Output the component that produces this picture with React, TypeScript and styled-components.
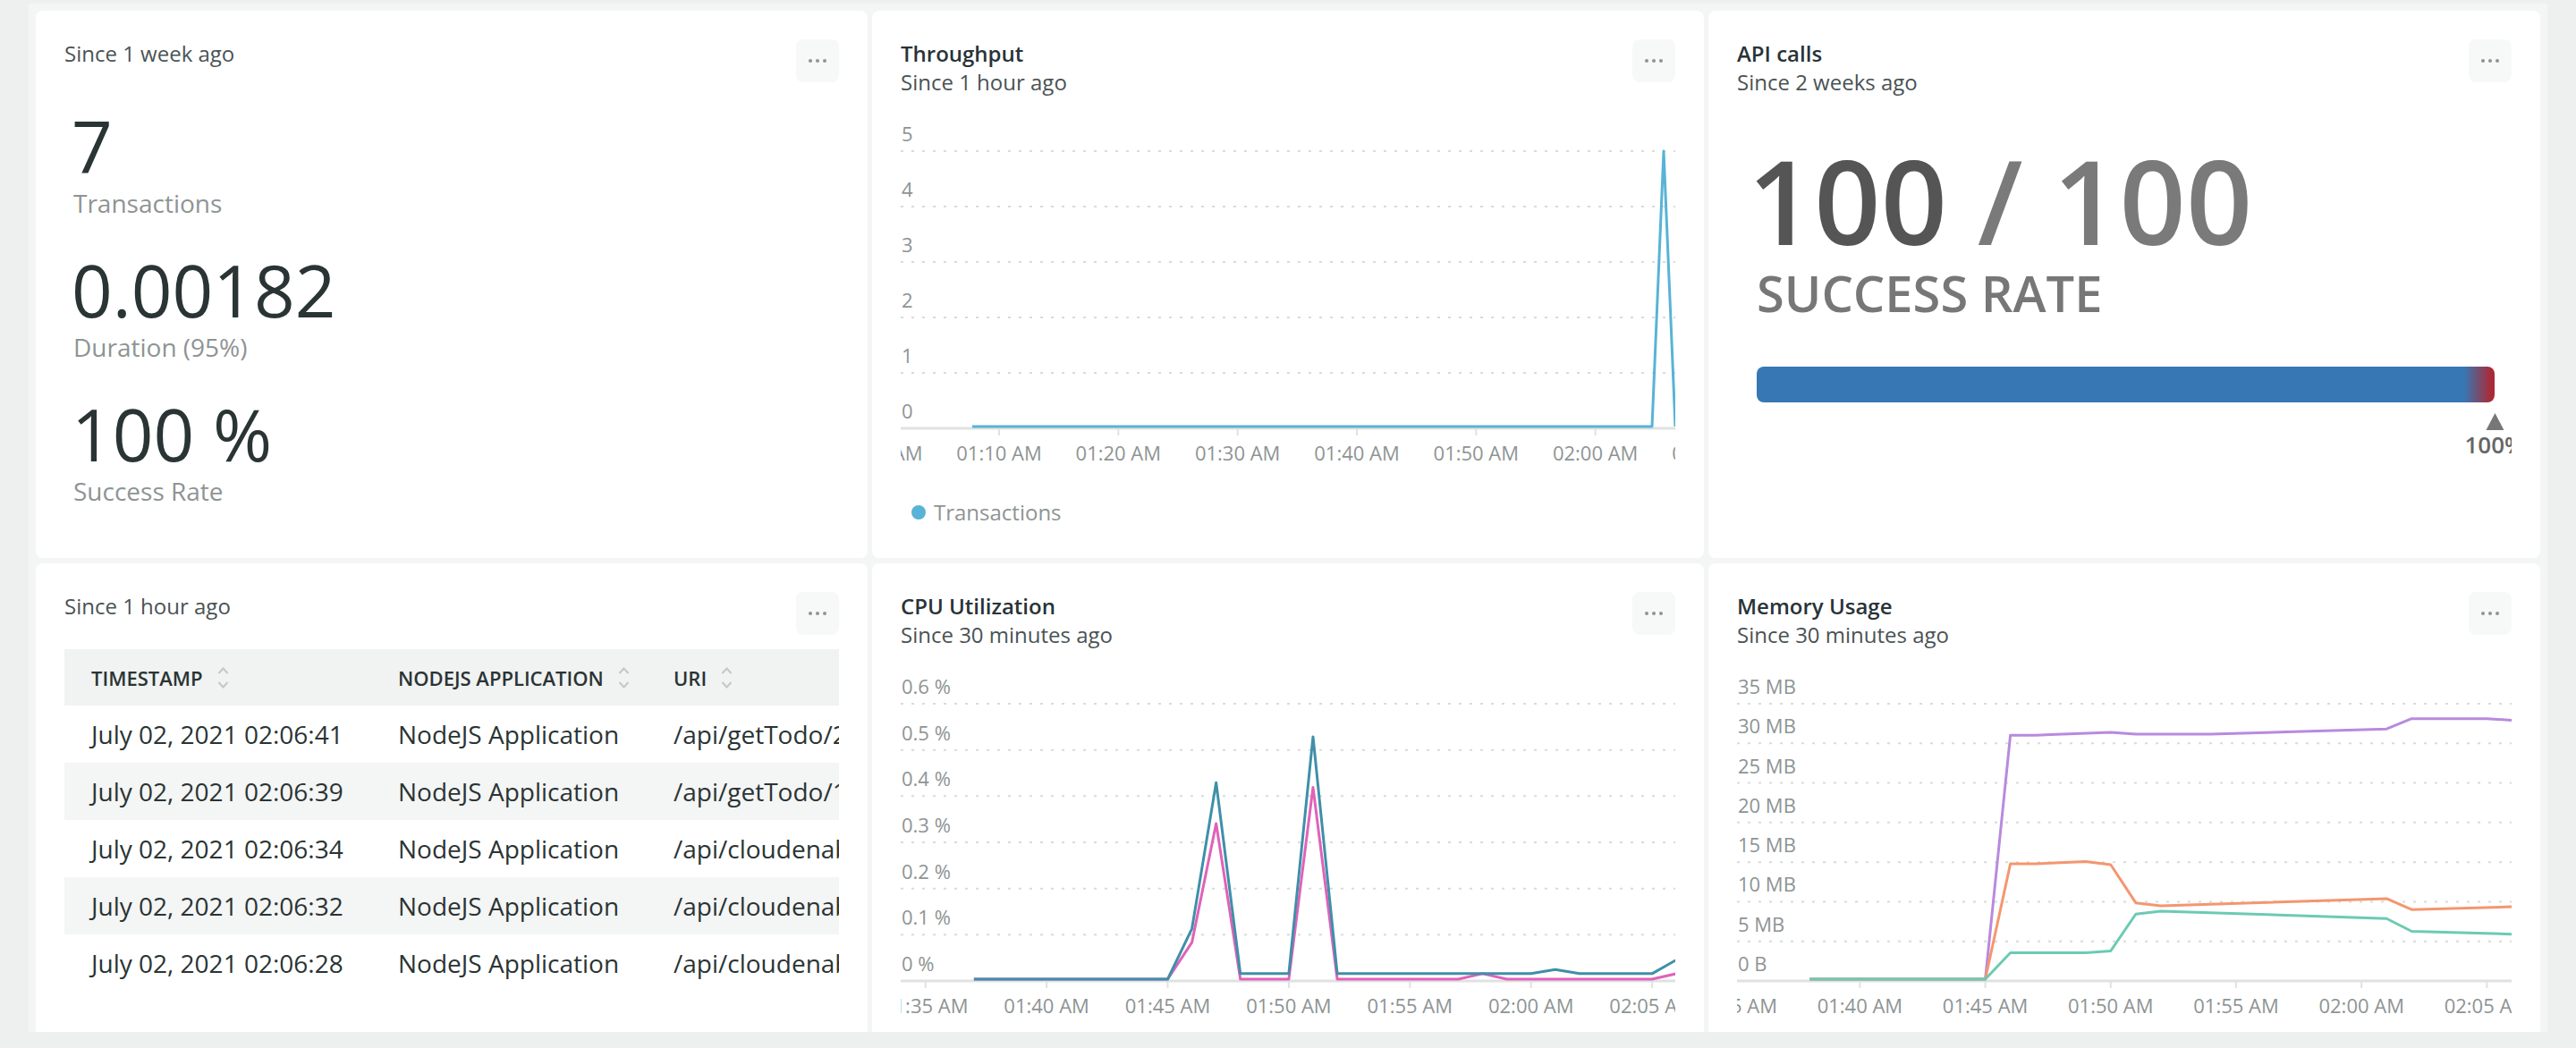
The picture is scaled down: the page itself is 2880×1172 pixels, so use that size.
import React from "react";
import styled, { createGlobalStyle } from "styled-components";

const GlobalStyle = createGlobalStyle`
  *, *::before, *::after { box-sizing: border-box; }
  html, body { margin: 0; padding: 0; background: #eef0f0; }
  body {
    font-family: "Open Sans", "Noto Sans", sans-serif;
    width: 2880px;
    height: 1172px;
    overflow: hidden;
  }
`;

const Page = styled.div`
  width: 2880px;
  height: 1172px;
  padding: 4px 32px 18px 32px;
  background: #eef0f0;
`;

const Dashboard = styled.main`
  height: 1150px;
  background: #f4f5f5;
  padding: 8px;
  overflow: hidden;
  display: grid;
  grid-template-columns: repeat(3, 930px);
  grid-template-rows: 612px 612px;
  column-gap: 5px;
  row-gap: 6px;
`;

const Card = styled.section`
  background: #ffffff;
  border-radius: 8px;
  padding: 32px;
  display: flex;
  flex-direction: column;
  min-width: 0;
  overflow: hidden;
`;

const CardHeader = styled.header`
  display: flex;
  justify-content: space-between;
  align-items: flex-start;
  height: 48px;
  flex-shrink: 0;
`;

const Titles = styled.div`
  display: flex;
  flex-direction: column;
`;

const Title = styled.h2`
  margin: 0;
  font-size: 24px;
  line-height: 32px;
  font-weight: 600;
  color: #293338;
`;

const Subtitle = styled.div`
  font-size: 24px;
  line-height: 32px;
  color: #4a5354;
`;

const MenuButton = styled.button`
  width: 48px;
  height: 48px;
  border: none;
  border-radius: 8px;
  background: #f7f8f8;
  display: flex;
  align-items: center;
  justify-content: center;
  gap: 4px;
  padding: 0;
`;

const MenuDot = styled.span`
  width: 4px;
  height: 4px;
  border-radius: 50%;
  background: #8e9494;
`;

/* ---------- Billboard (card 1) ---------- */
const MetricList = styled.div`
  margin-top: 31px;
  padding-left: 8px;
  display: flex;
  flex-direction: column;
`;

const Metric = styled.div`
  margin-bottom: 37px;
`;

const MetricValue = styled.div`
  font-size: 80px;
  line-height: 80px;
  color: #2a3434;
`;

const MetricLabel = styled.div`
  margin-top: 4px;
  margin-left: 2px;
  font-size: 28px;
  line-height: 40px;
  color: #8e9494;
`;

/* ---------- Gauge (card 3) ---------- */
const Gauge = styled.div`
  margin-top: 67px;
  padding: 0 19px 0 22px;
  overflow: hidden;
  display: flex;
  flex-direction: column;
`;

const BigNumber = styled.div`
  margin-left: -10px;
  font-size: 130px;
  line-height: 130px;
  font-weight: 600;
  white-space: nowrap;
`;

const NumPart = styled.span<{ $tone: string }>`
  color: ${(p) => p.$tone};
`;

const GaugeLabel = styled.div`
  margin-top: 10px;
  font-size: 56px;
  line-height: 56px;
  font-weight: 600;
  color: #777777;
`;

const Bar = styled.div`
  margin-top: 55px;
  height: 40px;
  border-radius: 8px;
  background: linear-gradient(
    to right,
    #3777b4 0,
    #3777b4 calc(100% - 34px),
    #a92a36 calc(100% - 4px),
    #a92a36 100%
  );
`;

const MarkerTrack = styled.div`
  position: relative;
  height: 64px;
  margin-top: 12px;
`;

const Marker = styled.div`
  position: absolute;
  top: 0;
  transform: translateX(-50%);
  display: flex;
  flex-direction: column;
  align-items: center;
`;

const Triangle = styled.span`
  width: 0;
  height: 0;
  border-left: 10px solid transparent;
  border-right: 10px solid transparent;
  border-bottom: 19px solid #777777;
`;

const MarkerLabel = styled.span`
  margin-top: 3px;
  font-size: 26px;
  line-height: 26px;
  font-weight: 600;
  color: #666666;
`;

/* ---------- Charts ---------- */
const ChartSvg = styled.svg`
  display: block;
  flex-shrink: 0;
  margin-top: 28px;
  text {
    font-family: "Open Sans", "Noto Sans", sans-serif;
    font-size: 22px;
    fill: #8e9494;
  }
`;

const Legend = styled.div`
  margin-top: 27px;
  padding-left: 12px;
  display: flex;
  align-items: center;
  gap: 9px;
  font-size: 24px;
  line-height: 32px;
  color: #8e9494;
`;

const LegendDot = styled.span<{ $color: string }>`
  width: 16px;
  height: 16px;
  border-radius: 50%;
  background: ${(p) => p.$color};
`;

/* ---------- Table (card 4) ---------- */
const TableWrap = styled.div`
  margin-top: 16px;
  overflow: hidden;
`;

const Table = styled.table`
  border-collapse: collapse;
  table-layout: fixed;
  width: 1200px;
`;

const HeadCell = styled.th`
  height: 63px;
  padding: 0 0 0 30px;
  background: #f1f2f2;
  text-align: left;
  font-size: 22px;
  font-weight: 600;
  text-transform: uppercase;
  color: #2a3434;
  white-space: nowrap;
`;

const HeadInner = styled.span`
  display: inline-flex;
  align-items: center;
  gap: 15px;
`;

const Row = styled.tr<{ $striped: boolean }>`
  background: ${(p) => (p.$striped ? "#f4f5f5" : "#ffffff")};
`;

const Cell = styled.td`
  height: 64px;
  padding: 0 0 0 30px;
  font-size: 28px;
  color: #2a3434;
  white-space: nowrap;
  overflow: hidden;
`;

/* ---------- helpers ---------- */
const W = 866;
const H = 410;
const TOP = 49;
const AXIS = 359;
const ZERO = 357;

type Series = { color: string; points: [number, number][] };
type Tick = { x: number; label: string };

function LineChart({
  yLabels,
  vmax,
  ticks,
  series,
}: {
  yLabels: string[];
  vmax: number;
  ticks: Tick[];
  series: Series[];
}) {
  const n = yLabels.length - 1;
  const step = (AXIS - TOP) / n;
  const y = (v: number) => ZERO - (v / vmax) * (ZERO - TOP);
  return (
    <ChartSvg width={W} height={H} viewBox={`0 0 ${W} ${H}`}>
      {yLabels.map((label, i) => {
        const gy = TOP + i * step;
        return (
          <g key={label}>
            <text x={1} y={gy - 11}>
              {label}
            </text>
            {i < n && (
              <line
                x1={0}
                x2={W}
                y1={gy}
                y2={gy}
                stroke="#d8dbdb"
                strokeWidth={2}
                strokeDasharray="3 9"
              />
            )}
          </g>
        );
      })}
      <line x1={0} x2={W} y1={AXIS} y2={AXIS} stroke="#e0e2e2" strokeWidth={3} />
      {ticks.map((t) => (
        <g key={t.label}>
          {t.x >= 0 && t.x <= W && (
            <line x1={t.x} x2={t.x} y1={AXIS} y2={AXIS + 8} stroke="#e0e2e2" strokeWidth={2} />
          )}
          <text x={t.x} y={395} textAnchor="middle">
            {t.label}
          </text>
        </g>
      ))}
      {series.map((s, i) => (
        <polyline
          key={i}
          points={s.points.map(([x, v]) => `${x},${y(v)}`).join(" ")}
          fill="none"
          stroke={s.color}
          strokeWidth={3}
          strokeLinejoin="round"
        />
      ))}
    </ChartSvg>
  );
}

function CardMenu() {
  return (
    <MenuButton aria-label="More">
      <MenuDot />
      <MenuDot />
      <MenuDot />
    </MenuButton>
  );
}

function SortIcon() {
  return (
    <svg width="15" height="28" viewBox="0 0 15 28" aria-hidden="true">
      <path d="M2.5 9 L7.5 3.5 L12.5 9" fill="none" stroke="#c3c8c8" strokeWidth="2" />
      <path d="M2.5 19 L7.5 24.5 L12.5 19" fill="none" stroke="#c3c8c8" strokeWidth="2" />
    </svg>
  );
}

/* ---------- data ---------- */
const throughputTicks: Tick[] = [
  "01:00 AM",
  "01:10 AM",
  "01:20 AM",
  "01:30 AM",
  "01:40 AM",
  "01:50 AM",
  "02:00 AM",
  "02:10 AM",
].map((label, k) => ({ label, x: 110 + (k - 1) * 133.33 }));

const fiveMinLabels = [
  "01:35 AM",
  "01:40 AM",
  "01:45 AM",
  "01:50 AM",
  "01:55 AM",
  "02:00 AM",
  "02:05 AM",
];

const cpuX = (m: number) => 27.7 + m * 27.08;
const memX = (m: number) => -2.8 + m * 28.04;

const cpuTicks: Tick[] = fiveMinLabels.map((label, k) => ({ label, x: cpuX(k * 5) }));
const memTicks: Tick[] = fiveMinLabels.map((label, k) => ({ label, x: memX(k * 5) }));

const mk = (fx: (m: number) => number, pts: [number, number][]): [number, number][] =>
  pts.map(([m, v]) => [fx(m), v]);

const cpuSeries: Series[] = [
  {
    color: "#e062b9",
    points: mk(cpuX, [
      [2, 0], [10, 0], [11, 0.08], [12, 0.339], [13, 0], [15, 0], [16, 0.418], [17, 0],
      [22, 0], [23, 0.012], [24, 0], [30, 0], [31, 0.012],
    ]),
  },
  {
    color: "#3f8fa9",
    points: mk(cpuX, [
      [2, 0], [10, 0], [11, 0.11], [12, 0.428], [13, 0.012], [15, 0.012], [16, 0.528],
      [17, 0.012], [25, 0.012], [26, 0.021], [27, 0.012], [30, 0.012], [31, 0.042],
    ]),
  },
];

const memSeries: Series[] = [
  {
    color: "#b88ade",
    points: mk(memX, [
      [3, 0], [10, 0], [11, 31.0], [12, 31.0], [15, 31.36], [16, 31.14], [19, 31.14],
      [26, 31.8], [27, 33.1], [30, 33.1], [31, 32.9],
    ]),
  },
  {
    color: "#f4966f",
    points: mk(memX, [
      [3, 0], [10, 0], [11, 14.66], [12, 14.66], [14, 14.95], [15, 14.55], [16, 9.7],
      [17, 9.33], [26, 10.23], [27, 8.84], [31, 9.2],
    ]),
  },
  {
    color: "#6ccab4",
    points: mk(memX, [
      [3, 0], [10, 0], [11, 3.35], [14, 3.35], [15, 3.59], [16, 8.27], [17, 8.64],
      [26, 7.7], [27, 6.08], [31, 5.72],
    ]),
  },
];

const metrics = [
  { value: "7", label: "Transactions" },
  { value: "0.00182", label: "Duration (95%)" },
  { value: "100 %", label: "Success Rate" },
];

const rows = [
  ["July 02, 2021 02:06:41", "NodeJS Application", "/api/getTodo/2"],
  ["July 02, 2021 02:06:39", "NodeJS Application", "/api/getTodo/1"],
  ["July 02, 2021 02:06:34", "NodeJS Application", "/api/cloudenabled"],
  ["July 02, 2021 02:06:32", "NodeJS Application", "/api/cloudenabled"],
  ["July 02, 2021 02:06:28", "NodeJS Application", "/api/cloudenabled"],
];

export default function App() {
  const successPct = 100;
  return (
    <>
      <GlobalStyle />
      <Page>
        <Dashboard>
          {/* Card 1: billboard */}
          <Card>
            <CardHeader>
              <Titles>
                <Subtitle>Since 1 week ago</Subtitle>
              </Titles>
              <CardMenu />
            </CardHeader>
            <MetricList>
              {metrics.map((m) => (
                <Metric key={m.label}>
                  <MetricValue>{m.value}</MetricValue>
                  <MetricLabel>{m.label}</MetricLabel>
                </Metric>
              ))}
            </MetricList>
          </Card>

          {/* Card 2: throughput */}
          <Card>
            <CardHeader>
              <Titles>
                <Title>Throughput</Title>
                <Subtitle>Since 1 hour ago</Subtitle>
              </Titles>
              <CardMenu />
            </CardHeader>
            <LineChart
              yLabels={["5", "4", "3", "2", "1", "0"]}
              vmax={5}
              ticks={throughputTicks}
              series={[
                {
                  color: "#58b3d6",
                  points: [
                    [80, 0],
                    [840, 0],
                    [853, 5],
                    [866, 0],
                  ],
                },
              ]}
            />
            <Legend>
              <LegendDot $color="#58b3d6" />
              Transactions
            </Legend>
          </Card>

          {/* Card 3: API calls gauge */}
          <Card>
            <CardHeader>
              <Titles>
                <Title>API calls</Title>
                <Subtitle>Since 2 weeks ago</Subtitle>
              </Titles>
              <CardMenu />
            </CardHeader>
            <Gauge>
              <BigNumber>
                <NumPart $tone="#555555">100</NumPart>
                <NumPart $tone="#7a7a7a"> / 100</NumPart>
              </BigNumber>
              <GaugeLabel>SUCCESS RATE</GaugeLabel>
              <Bar />
              <MarkerTrack>
                <Marker style={{ left: `${successPct}%` }}>
                  <Triangle />
                  <MarkerLabel>100%</MarkerLabel>
                </Marker>
              </MarkerTrack>
            </Gauge>
          </Card>

          {/* Card 4: table */}
          <Card>
            <CardHeader>
              <Titles>
                <Subtitle>Since 1 hour ago</Subtitle>
              </Titles>
              <CardMenu />
            </CardHeader>
            <TableWrap>
              <Table>
                <colgroup>
                  <col style={{ width: 343 }} />
                  <col style={{ width: 308 }} />
                  <col style={{ width: 549 }} />
                </colgroup>
                <thead>
                  <tr>
                    {["Timestamp", "NodeJS Application", "URI"].map((h) => (
                      <HeadCell key={h}>
                        <HeadInner>
                          {h}
                          <SortIcon />
                        </HeadInner>
                      </HeadCell>
                    ))}
                  </tr>
                </thead>
                <tbody>
                  {rows.map((r, i) => (
                    <Row key={r[0]} $striped={i % 2 === 1}>
                      {r.map((c, j) => (
                        <Cell key={j}>{c}</Cell>
                      ))}
                    </Row>
                  ))}
                </tbody>
              </Table>
            </TableWrap>
          </Card>

          {/* Card 5: CPU */}
          <Card>
            <CardHeader>
              <Titles>
                <Title>CPU Utilization</Title>
                <Subtitle>Since 30 minutes ago</Subtitle>
              </Titles>
              <CardMenu />
            </CardHeader>
            <LineChart
              yLabels={["0.6 %", "0.5 %", "0.4 %", "0.3 %", "0.2 %", "0.1 %", "0 %"]}
              vmax={0.6}
              ticks={cpuTicks}
              series={cpuSeries}
            />
          </Card>

          {/* Card 6: Memory */}
          <Card>
            <CardHeader>
              <Titles>
                <Title>Memory Usage</Title>
                <Subtitle>Since 30 minutes ago</Subtitle>
              </Titles>
              <CardMenu />
            </CardHeader>
            <LineChart
              yLabels={["35 MB", "30 MB", "25 MB", "20 MB", "15 MB", "10 MB", "5 MB", "0 B"]}
              vmax={35}
              ticks={memTicks}
              series={memSeries}
            />
          </Card>
        </Dashboard>
      </Page>
    </>
  );
}
